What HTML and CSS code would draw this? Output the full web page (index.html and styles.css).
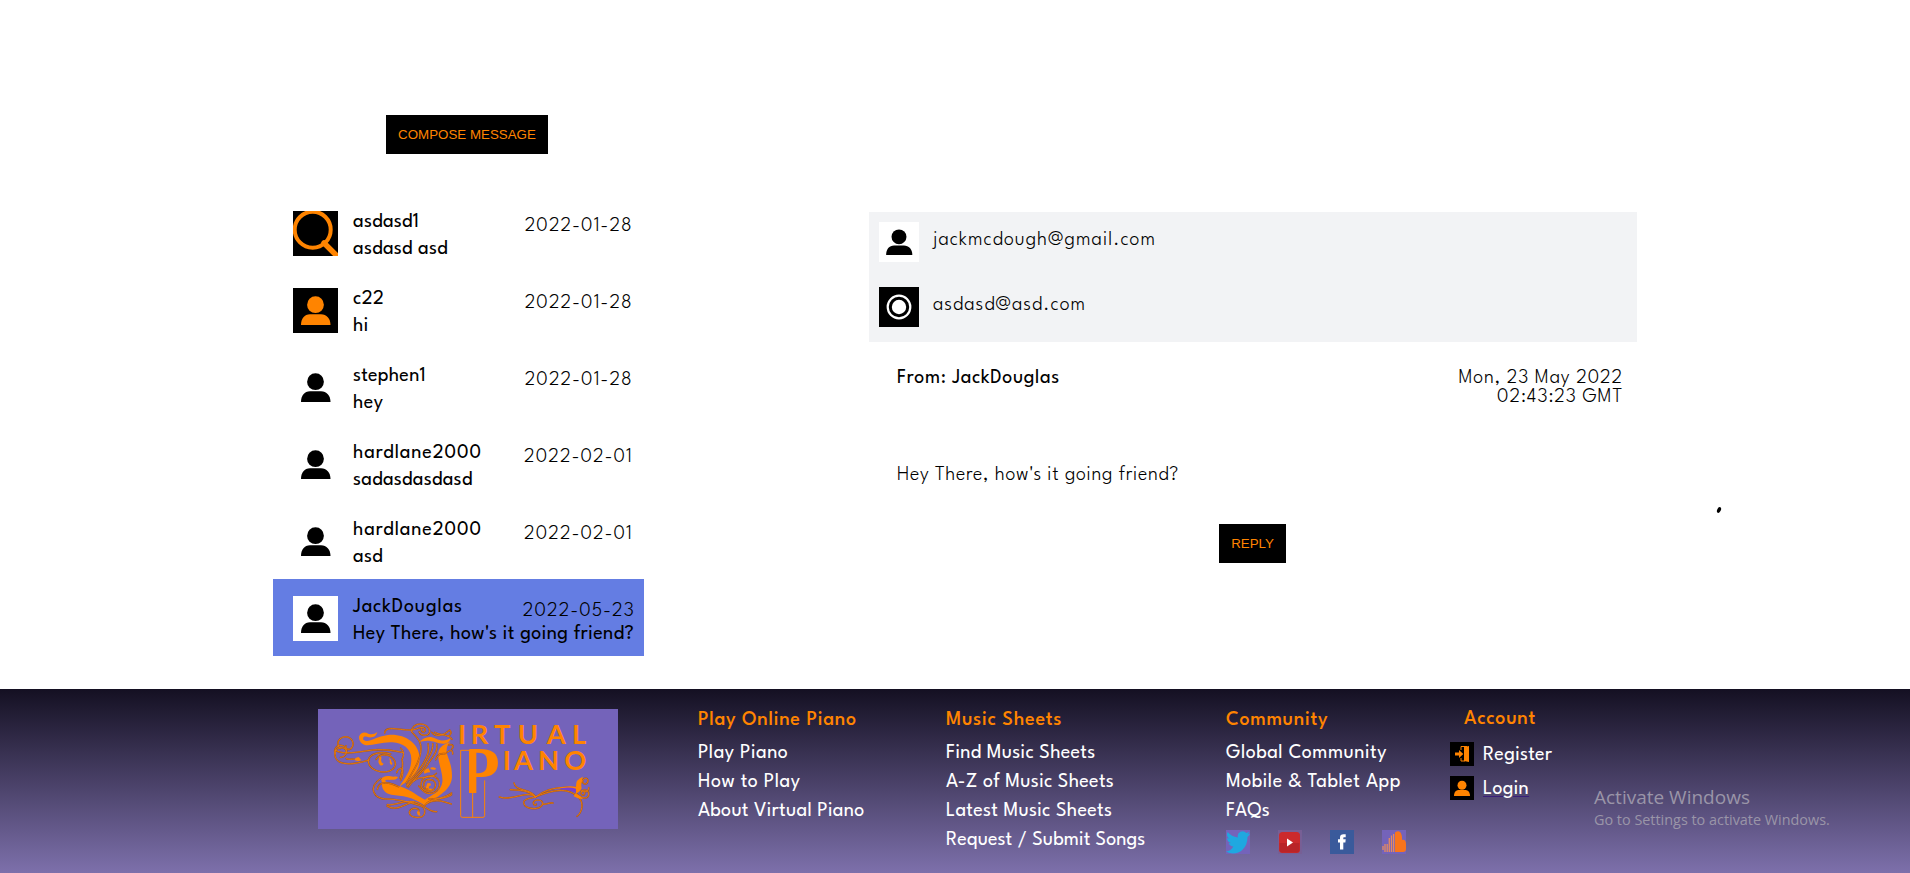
FILE: index.html
```html
<!DOCTYPE html>
<html lang="en">
<head>
<meta charset="utf-8">
<title>Virtual Piano - Messages</title>
<link rel="stylesheet" href="styles.css">
</head>
<body>
<svg class="defs" width="0" height="0">
  <symbol id="user" viewBox="0 0 45 45"><circle cx="22.5" cy="16.7" r="8.4"/><path d="M8 37c0-6.500 3.500-10.700 9-10.700h11c5.500 0 9.500 4.200 9.500 10.700z"/></symbol>
</svg>
<main class="page">
  <section class="inbox">
    <button class="btn compose">COMPOSE MESSAGE</button>
    <ul class="threads">
      <li class="thread">
        <svg class="avatar dark" viewBox="0 0 45 45"><circle cx="19.700" cy="18.700" r="18" fill="none" stroke="#ff8400" stroke-width="4"/><path d="M31 32L43 44" stroke="#ff8400" stroke-width="5.500" stroke-linecap="round"/></svg>
        <div class="who"><b class="tight">asdasd1</b><b class="tight">asdasd asd</b></div><time>2022-01-28</time>
      </li>
      <li class="thread">
        <svg class="avatar dark"><use href="#user"/></svg>
        <div class="who"><b>c22</b><b>hi</b></div><time>2022-01-28</time>
      </li>
      <li class="thread">
        <svg class="avatar"><use href="#user"/></svg>
        <div class="who"><b class="tight">stephen1</b><b>hey</b></div><time>2022-01-28</time>
      </li>
      <li class="thread">
        <svg class="avatar"><use href="#user"/></svg>
        <div class="who"><b class="wide">hardlane2000</b><b class="tight">sadasdasdasd</b></div><time>2022-02-01</time>
      </li>
      <li class="thread">
        <svg class="avatar"><use href="#user"/></svg>
        <div class="who"><b class="wide">hardlane2000</b><b class="tight">asd</b></div><time>2022-02-01</time>
      </li>
      <li class="thread selected">
        <svg class="avatar"><use href="#user"/></svg>
        <div class="who"><b class="wide">JackDouglas</b><b>Hey There, how's it going friend?</b></div><time>2022-05-23</time>
      </li>
    </ul>
  </section>
  <section class="reader">
    <div class="people">
      <div class="person"><svg class="avatar small"><use href="#user"/></svg><span>jackmcdough@gmail.com</span></div>
      <div class="person"><svg class="avatar small dark" viewBox="0 0 40 40"><circle cx="20" cy="20" r="11.300" fill="none" stroke="#fff" stroke-width="2.200"/><circle cx="20" cy="20" r="7.200" fill="#fff"/></svg><span>asdasd@asd.com</span></div>
    </div>
    <div class="meta"><b>From: JackDouglas</b><time>Mon, 23 May 2022<br>02:43:23 GMT</time></div>
    <p class="message">Hey There, how's it going friend?</p>
    <button class="btn reply">REPLY</button>
  </section>
  <svg class="speck" viewBox="0 0 6 8"><ellipse cx="3" cy="4" rx="1.800" ry="3" transform="rotate(25 3 4)"/></svg>
</main>
<footer class="footer">
  <svg class="logo" viewBox="54 87 900 360">
    <rect x="54" y="87" width="900" height="360" fill="#7463ba"/>
    <g fill="#ff8400">
      <path d="M177 170C182 157 194 155 205 161C215 165 224 162 232 156C228 172 213 175 201 170C192 168 188 171 190 179C206 192 222 170 264 165C310 160 359 187 359 237C359 281 326 303 298 320C318 289 334 270 334 237C334 207 310 189 277 187C240 185 204 203 188 192C180 186 177 179 177 170Z"/>
      <path d="M356 187C371 173 387 165 408 176C424 184 440 183 453 173C447 196 425 193 407 187C389 181 373 181 356 187Z"/>
      <path d="M452 186C441 195 438 204 441 222C448 244 456 259 456 288C456 330 415 347 375 377C340 350 305 347 274 344C250 339 242 322 246 295C257 310 279 314 300 319C336 331 357 352 375 359C393 345 423 337 427 306C430 279 412 247 415 218C418 199 434 191 452 186Z"/>
      <path d="M243 298C251 284 270 289 280 290C287 290 291 289 294 292C288 302 277 299 268 300C257 297 251 304 251 314Z"/>
      <path d="M234 223q14 4 9 17q2 12 8 10q-3 11-12 4q-7-9-1-18zM267 234q8 3 7 12q6 4 1 9q-8-3-5-12zM162 239q6-8 14-8l8 10q-10 5-22-2zM352 394q9-3 7 6q5 6-2 7q-8-4-5-13zM382 310q12-4 11 6q-10 3-5 10q12-1 15 5q-16 12-28-1z"/>
      <path d="M371 273q6-8 15-8l5 12q-8 0-18 4zM390 264q8-5 19 2q-10 8-19-2z"/>
    </g>
    <g fill="none" stroke="#a3561f" stroke-width="4.800" stroke-linecap="round"><use href="#curls"/></g>
    <g fill="none" stroke="#f58008" stroke-width="2.400" stroke-linecap="round">
      <g id="curls" stroke-width="inherit">
        <path d="M154 205A23 21 0 1 0 120 206M154 205c-8 7-20 1-16-8M140 215A18 18 0 1 0 106 222M121 232c20 0 27-29 2-29c-26 0-26 42 8 47c26 5 56-4 76-10M106 211c30 18 88-1 127-2c40 0 53 4 77 9M139 236c10 4 17 1 23 1"/>
        <path d="M272 222c-34-10-66 0-67 21c0 35 70 46 81 13c4-27-38-46-58-18M302 204c14 14 8 26 4 34c5 20 0 37-6 57M290 278c4-13 14-17 18-7c1 13-2 23-6 30"/>
        <path d="M254 159c2-30 69 2 97-13c17-7 27-4 24 7c-7 8-13-1-10-7M335 155c-2-30 50-30 54-3c0 18-28 18-32 3M335 155c15 17 28 27 28 50c0 36-23 66-44 104"/>
        <path d="M384 191c6 27-7 48-19 67c-14 22-29 34-45 58M398 191c4 24-18 46-24 66c-8 19-36 37-53 62M410 192c5 23-12 38-25 58c-13 27-41 43-60 72M395 157c13 18 39 8 54-7c7 6 4 16-6 19M404 157c17 11 43 4 52 21M446 195c15-4 16 5 9 12M440 218c13-10 19-8 18 4M407 239c8-21 19-18 28-18M340 304c19-20 56-5 69-24"/>
        <path d="M243 295c-42 28-21 62 17 62c36 0 66 9 91 17c20 5 25 12 23 25c-1 19-45 17-46-1c2-16 27-16 29-6M232 328c5-31 43-18 64-8M261 378c27 18 53-6 81-13M262 374c31 4 61-25 105 2c20 15 36 20 43 19M374 377c15-26 61-16 81-33M380 371c22-16 47-8 74 1M386 357c34 1 57-9 69-18M383 328c-19-4-14-32 7-29c27 2 19 37-8 35c-31-6-21-48 11-46c38 3 30 51-1 52c-18 4-28-13-36-22"/>
        <path d="M598 351c36 14 83-22 109 0c-15 4-37 5-36 17c2 23 55 24 57 3c0-14-25-14-28-3c0 8 8 10 9 4M728 372c10 4 20-6 31-3M707 351c-24-22-47-20-76-22M706 349c-16-25-60-14-64-40M706 352c27-24 67-34 122-29M708 350c35-15 88-31 120-4M841 310c13-24 26-15 22-4c-7 13-17 3-15-4M836 325c14 18 32 10 30-2M828 339c22 24 40 16 38-1c-5-12-23-10-23 2c2 9 13 6 11-2M837 353c15 16 10 44-6 56"/>
      </g>
    </g>
    <path d="M777 326q28-8 49-6l5 18q-23-9-54-12z" fill="#7a3fd0"/>
    <path d="M765 328q30-12 63-8q-2-22 21-30q-8 24-4 35q-8 15-17 14v-13q-24-8-63 2zM826 340q16 8 24 18q-18-2-29-9z" fill="#ff8400"/>
    <g fill="#ff8400" font-family="Lato, sans-serif" font-weight="700">
      <text y="191" font-size="82" x="474 512 582 653 740 816">IRTUAL</text>
      <text y="269" font-size="82" x="608 642 714 793">IANO</text>
      <clipPath id="bowl"><rect x="508" y="200" width="100" height="100"/></clipPath>
      <text class="key-letter" x="473" y="346" font-size="207" clip-path="url(#bowl)">P</text>
      <rect x="507" y="210" width="22" height="129"/>
    </g>
    <path d="M508 211H482V407q0 5 5 5H549q5 0 5-5V301M518 339V412" fill="none" stroke="#ff8400" stroke-width="3"/>
  </svg>
  <nav class="col play"><h4>Play Online Piano</h4><a class="loose">Play Piano</a><a class="loose">How to Play</a><a>About Virtual Piano</a></nav>
  <nav class="col sheets"><h4>Music Sheets</h4><a>Find Music Sheets</a><a>A-Z of Music Sheets</a><a>Latest Music Sheets</a><a class="close">Request / Submit Songs</a></nav>
  <nav class="col community"><h4>Community</h4><a class="loose">Global Community</a><a class="loose">Mobile &amp; Tablet App</a><a class="loose">FAQs</a>
    <div class="social">
      <svg viewBox="0 0 24 24"><rect width="24" height="24" fill="#7463ba"/><path fill="#1fa8e0" d="M24 3.600c-.9.400-1.800.7-2.800.8 1-.6 1.800-1.600 2.200-2.700-1 .6-2 1-3.100 1.200A4.900 4.900 0 0 0 11.900 7.400C7.700 7.200 4.100 5.200 1.700 2.100.4 4.300 1 7.200 3.200 8.700c-.8 0-1.600-.2-2.200-.6 0 2.300 1.600 4.400 3.900 4.900-.7.200-1.500.2-2.200.1.600 2 2.400 3.400 4.600 3.400A9.900 9.900 0 0 1 0 21.500C8.600 26.500 21.500 21.500 21.500 6.900 22.500 6.200 23.300 5.200 24 4.100z"/></svg>
      <svg viewBox="0 0 24 24"><rect width="24" height="24" fill="#775f95"/><rect x="1" y="2" width="21" height="21" rx="3.500" fill="#cc2a2c"/><path d="M1.500 13h20v6.500a3 3 0 0 1-3 3h-14a3 3 0 0 1-3-3z" fill="#b92428"/><path d="M9 8.500v8l6-4z" fill="#fff"/></svg>
      <svg viewBox="0 0 24 24"><rect width="24" height="24" fill="#3a5a9b"/><path fill="#fff" d="M10 19.500v-7H8V9.300h2V7.500C10 5 11.300 4.300 13.500 4.300h2.200v2.900h-1.400c-.8 0-1 .3-1 1v1.100h2.400l-.3 3.200h-2.100v7z"/></svg>
      <svg viewBox="0 0 24 24"><rect width="24" height="24" fill="#7463ba"/><path d="M1 16v4M3 14v8M5.200 14v8M7.300 8v14M9.500 5.500V22M11.600 4V22" stroke="#e58a60" stroke-width="1.300"/><path d="M13 2.500c4-3 7.500 0 7 7.500 3-1 4 1.500 4 4v5c0 2-1 3-3 3h-8z" fill="#f8741c"/></svg>
    </div>
  </nav>
  <nav class="col account"><h4>Account</h4>
    <a class="entry"><svg viewBox="0 0 24 24"><rect width="24" height="24"/><path d="M5 10.500h4V8l4.300 4L9 16v-2.500H5zM14 5l5-1v16l-5-1z" fill="#ff8400"/><path d="M11 8V4.500h6M11 16v3h4" fill="none" stroke="#ff8400"/></svg><span>Register</span></a>
    <a class="entry"><svg viewBox="0 0 24 24"><rect width="24" height="24"/><path d="M4 20c0-4 2-6 5-6h6c3 0 5 2 5 6z" fill="#ff8400"/><circle cx="12" cy="9.200" r="4.500" fill="#ff8400"/></svg><span class="underlined">Login</span></a>
  </nav>
  <aside class="watermark"><strong>Activate Windows</strong><span>Go to Settings to activate Windows.</span></aside>
</footer>
</body>
</html>
```
FILE: styles.css
```css
* { box-sizing: border-box; }
body { margin: 0; font: 300 20px/20px "League Spartan", Jost, Lato, sans-serif; color: #000; background: #fff; }
b { font-weight: 400; letter-spacing: 0.4px; }
.defs { position: absolute; }
.page { height: 689px; display: flex; align-items: flex-start; position: relative; }
.inbox { width: 371px; margin-left: 273px; padding-top: 115px; display: flex; flex-direction: column; }
.btn { height: 39px; padding: 0; border: 0; background: #000; color: #ff8400; font: 13.33px/38px "Liberation Sans", Arial, sans-serif; }
.compose { width: 162px; margin-left: 113px; }
.threads { list-style: none; margin: 40px 0 0; padding: 0; }
.thread { height: 77px; padding: 17px 11px 0 20px; display: flex; position: relative; }
.selected { background: #647de3; }
.avatar { width: 45px; height: 45px; flex: none; background: #fff; fill: #000; }
.dark { background: #000; fill: #ff8400; }
.small { width: 40px; height: 40px; }
.who { margin-left: 15px; padding-top: 1px; display: flex; flex-direction: column; gap: 7px; white-space: nowrap; }
.who b { display: block; }
.tight { letter-spacing: 0.25px; }
.wide { letter-spacing: 0.85px; }
.thread time { position: absolute; right: 11px; top: 22px; letter-spacing: 1.05px; }
.selected time { right: 9px; }
.reader { width: 768px; margin: 212px 0 0 225px; display: flex; flex-direction: column; }
.people { height: 130px; padding: 10px; background: #f2f3f5; display: flex; flex-direction: column; gap: 25px; }
.person { display: flex; gap: 14px; height: 40px; }
.person span { padding-top: 8px; letter-spacing: 1px; }
.meta { display: flex; justify-content: space-between; padding: 27px 14px 0 28px; line-height: 19px; }
.meta b { letter-spacing: 0.65px; }
.meta time { text-align: right; letter-spacing: 0.85px; }
.message { margin: 59px 0 0 28px; line-height: 19px; letter-spacing: 0.68px; }
.reply { width: 67px; margin: 39px 0 0 350px; }
.speck { width: 6px; height: 8px; margin: 506px 0 0 79px; }
.footer { height: 184px; background: linear-gradient(#141022, #7d70ab); display: flex; align-items: flex-start; color: #fff; }
.logo { width: 300px; height: 120px; margin: 20px 0 0 318px; }
.key-letter { font-family: "Liberation Serif", serif; font-weight: 700; }
.col { display: flex; flex-direction: column; padding-top: 21px; white-space: nowrap; font-weight: 400; letter-spacing: 0.28px; }
.col h4 { margin: 0 0 9px; font-size: 20px; line-height: 20px; font-weight: 550; letter-spacing: 0.7px; color: #ff8400; }
.col a { height: 29px; line-height: 29px; }
.loose { letter-spacing: 0.5px; }
.close { letter-spacing: 0.1px; }
.play { width: 248px; margin-left: 80px; }
.sheets { width: 280px; }
.community { width: 224px; }
.social { display: flex; gap: 28px; margin-top: 4px; }
.social svg, .entry svg { width: 24px; height: 24px; flex: none; }
.account { width: 144px; padding-top: 20px; }
.account h4 { margin: 0 0 13px 14px; }
.col .entry { display: flex; gap: 9px; height: 24px; line-height: 26px; margin-bottom: 10px; }
.underlined { text-decoration: underline #3a1f7a 1px; text-underline-offset: 2px; }
.watermark { margin-top: 95px; display: flex; flex-direction: column; font-family: "Open Sans", "Noto Sans", sans-serif; font-weight: 400; color: #9a95a8; white-space: nowrap; }
.watermark strong { font-size: 19px; line-height: 26px; font-weight: 400; }
.watermark span { font-size: 14.4px; line-height: 20px; }
```
